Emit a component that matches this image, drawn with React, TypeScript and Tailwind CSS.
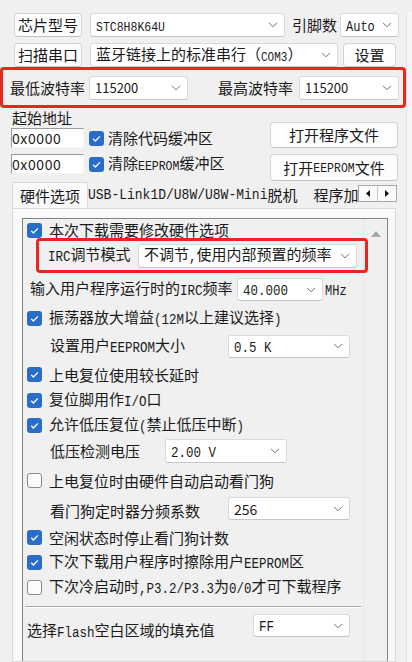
import React from "react";

type C = { children?: React.ReactNode; className?: string };

function M({ children, className }: C) {
  return (
    <span
      className={
        "inline-block scale-y-[1.18] font-['Liberation_Mono',monospace] " + (className ?? "text-[12.5px]")
      }
    >
      {children}
    </span>
  );
}

function Chevron() {
  return (
    <svg width="10" height="6" viewBox="0 0 10 6" className="shrink-0">
      <path d="M1 0.8 L5 4.8 L9 0.8" stroke="#707070" strokeWidth="1" fill="none" />
    </svg>
  );
}

function Select({ children, className }: C) {
  return (
    <div
      className={
        "flex items-center justify-between bg-white border border-[#dadada] border-b-[#c6c6c6] rounded-[3px] pl-[5px] pr-[6px] shrink-0 " +
        (className ?? "")
      }
    >
      <span className="whitespace-nowrap overflow-hidden">{children}</span>
      <Chevron />
    </div>
  );
}

function Btn({ children, className }: C) {
  return (
    <div
      className={
        "flex items-center justify-center bg-[#fdfdfd] border border-[#d4d4d4] border-b-[#c2c2c2] rounded-[4px] shrink-0 whitespace-nowrap " +
        (className ?? "")
      }
    >
      {children}
    </div>
  );
}

function Check({ on }: { on: boolean }) {
  if (on)
    return (
      <span className="w-[15px] h-[15px] rounded-[3px] bg-[#2a6dc9] flex items-center justify-center shrink-0">
        <svg width="11" height="11" viewBox="0 0 11 11">
          <path d="M2.2 5.8 L4.4 8 L8.9 3.4" stroke="white" strokeWidth="1.3" fill="none" />
        </svg>
      </span>
    );
  return <span className="w-[15px] h-[15px] rounded-[3px] border border-[#8a8a8a] bg-[#fbfbfb] shrink-0" />;
}

function CheckRow({ on, children, className }: C & { on: boolean }) {
  return (
    <div className={"flex items-center pl-[4px] " + (className ?? "")}>
      <Check on={on} />
      <span className="ml-[7px] whitespace-nowrap">{children}</span>
    </div>
  );
}

export default function App() {
  return (
    <div className="w-[412px] h-[662px] overflow-hidden bg-[#f0f0f0] flex font-['Noto_Sans_CJK_SC',sans-serif] text-[15px] leading-[20px] text-[#1a1a1a]">
      <div className="w-[406px] h-[662px] flex flex-col shrink-0">
        {/* row 1 */}
        <div className="flex items-center h-[24px] mt-[13px] pl-[14px]">
          <Btn className="w-[68px] h-[24px]">芯片型号</Btn>
          <Select className="w-[195px] h-[24px] ml-[8px]">
            <M className="text-[11.5px]">STC8H8K64U</M>
          </Select>
          <span className="ml-[7px] w-[45px] whitespace-nowrap">引脚数</span>
          <Select className="w-[59px] h-[24px] ml-[3px]">
            <M className="text-[12px]">Auto</M>
          </Select>
        </div>
        {/* row 2 */}
        <div className="flex items-center h-[24px] mt-[6px] pl-[14px]">
          <Btn className="w-[68px] h-[24px]">扫描串口</Btn>
          <Select className="w-[248px] h-[24px] ml-[8px]">
            蓝牙链接上的标准串行（<M className="text-[11px]">COM3</M>）
          </Select>
          <Btn className="w-[53px] h-[24px] ml-[5px]">设置</Btn>
        </div>
        {/* baud rate (highlighted) */}
        <div className="h-[41px] border-[3px] border-[#e8261f] rounded-[4px] flex items-center pl-[7px]">
          <span className="w-[79px] whitespace-nowrap">最低波特率</span>
          <Select className="w-[99px] h-[24px] text-[13px]">115200</Select>
          <span className="ml-[30px] w-[81px] whitespace-nowrap">最高波特率</span>
          <Select className="w-[100px] h-[24px] text-[13px]">115200</Select>
        </div>
        {/* start address */}
        <div className="flex justify-between">
          <div className="flex flex-col pl-[11px]">
            <div className="h-[19px] leading-[19px] pl-[1px]">起始地址</div>
            <div className="flex items-center h-[22px]">
              <div className="w-[73px] h-[20px] bg-white border-t border-l border-[#9c9c9c] border-b-[#f4f4f4] border-r-[#f4f4f4] border-b border-r flex items-center text-[14px] tracking-[0.6px]">
                0x0000
              </div>
              <span className="ml-[5px]">
                <Check on />
              </span>
              <span className="ml-[4px] whitespace-nowrap">清除代码缓冲区</span>
            </div>
            <div className="flex items-center h-[22px] mt-[4px]">
              <div className="w-[73px] h-[20px] bg-white border-t border-l border-[#9c9c9c] border-b-[#f4f4f4] border-r-[#f4f4f4] border-b border-r flex items-center text-[14px] tracking-[0.6px]">
                0x0000
              </div>
              <span className="ml-[5px]">
                <Check on />
              </span>
              <span className="ml-[4px] whitespace-nowrap">
                清除<M className="text-[11.5px]">EEPROM</M>缓冲区
              </span>
            </div>
          </div>
          <div className="flex flex-col pr-[8px] pt-[14px]">
            <Btn className="w-[128px] h-[26px]">打开程序文件</Btn>
            <Btn className="w-[128px] h-[27px] mt-[6px]">
              打开<M className="text-[11.5px]">EEPROM</M>文件
            </Btn>
          </div>
        </div>
        {/* tabs */}
        <div className="flex h-[26px] mt-[1px] ml-[12px] mr-[9px] shrink-0">
          <div className="flex-1 flex items-end overflow-hidden whitespace-nowrap">
            <div className="w-[76px] h-[27px] -mb-[1px] bg-[#f9f9f9] border-t border-l border-r border-[#d9d9d9] rounded-t-[2px] flex items-center justify-center relative z-10 shrink-0">
              硬件选项
            </div>
            <div className="h-[26px] flex items-center shrink-0">
              <M className="text-[13px]">USB-Link1D/U8W/U8W-Mini</M>脱机
            </div>
            <div className="h-[26px] flex items-center pl-[16px] shrink-0">程序加密后传输</div>
          </div>
          <div className="w-[39px] h-[17px] mt-[3px] border border-[#a8a8a8] bg-[#fbfbfb] flex shrink-0">
            <div className="flex-1 flex items-center justify-center">
              <svg width="4" height="7" viewBox="0 0 4 7">
                <path d="M4 0 L0 3.5 L4 7 Z" fill="#111" />
              </svg>
            </div>
            <div className="flex-1 flex items-center justify-center border-l border-[#c8c8c8]">
              <svg width="4" height="7" viewBox="0 0 4 7">
                <path d="M0 0 L4 3.5 L0 7 Z" fill="#111" />
              </svg>
            </div>
          </div>
        </div>
        {/* tab panel */}
        <div className="ml-[12px] w-[384px] flex-1 bg-[#f9f9f9] border border-[#d9d9d9] pt-[9px] pl-[9px] overflow-hidden">
          <div className="w-[366px] h-[460px] border border-[#828282] bg-[#f0f0f0] flex">
            <div className="w-[340px] flex flex-col">
              <CheckRow on className="h-[19px] pt-[3px]">
                本次下载需要修改硬件选项
              </CheckRow>
              <div className="ml-[13px] w-[332px] h-[35px] border-[3px] border-[#e8261f] rounded-[4px] flex items-center pl-[9px] relative z-10">
                <span className="w-[90px] whitespace-nowrap">
                  <M>IRC</M>调节模式
                </span>
                <Select className="w-[219px] h-[24px]">
                  不调节<M>,</M>使用内部预置的频率
                </Select>
              </div>
              <div className="h-[33px] flex items-center pl-[7px]">
                <span className="w-[207px] whitespace-nowrap">
                  输入用户程序运行时的<M>IRC</M>频率
                </span>
                <Select className="w-[86px] h-[23px]">
                  <M>40.000</M>
                </Select>
                <span className="ml-[2px]">
                  <M className="text-[12px]">MHz</M>
                </span>
              </div>
              <CheckRow on className="h-[25px]">
                振荡器放大增益<M>(12M</M>以上建议选择<M>)</M>
              </CheckRow>
              <div className="h-[30px] flex items-center pl-[27px]">
                <span className="w-[178px] whitespace-nowrap">
                  设置用户<M>EEPROM</M>大小
                </span>
                <Select className="w-[122px] h-[23px]">
                  <M>0.5 K</M>
                </Select>
              </div>
              <CheckRow on className="h-[27px]">
                上电复位使用较长延时
              </CheckRow>
              <CheckRow on className="h-[25px]">
                复位脚用作<M>I/O</M>口
              </CheckRow>
              <CheckRow on className="h-[25px]">
                允许低压复位<M>(</M>禁止低压中断<M>)</M>
              </CheckRow>
              <div className="h-[26px] flex items-center pl-[27px]">
                <span className="w-[115px] whitespace-nowrap">低压检测电压</span>
                <Select className="w-[122px] h-[24px]">
                  <M>2.00 V</M>
                </Select>
              </div>
              <CheckRow on={false} className="h-[33px]">
                上电复位时由硬件自动启动看门狗
              </CheckRow>
              <div className="h-[28px] flex items-center pl-[27px]">
                <span className="w-[178px] whitespace-nowrap">看门狗定时器分频系数</span>
                <Select className="w-[122px] h-[23px] self-start text-[14px]">256</Select>
              </div>
              <CheckRow on className="h-[25px]">
                空闲状态时停止看门狗计数
              </CheckRow>
              <CheckRow on className="h-[25px]">
                下次下载用户程序时擦除用户<M>EEPROM</M>区
              </CheckRow>
              <CheckRow on={false} className="h-[24px]">
                下次冷启动时<M>,P3.2/P3.3</M>为<M>0/0</M>才可下载程序
              </CheckRow>
              <div className="mt-[7px] mx-[2px] h-[2px] border-t border-[#a9a9a9] bg-white" />
              <div className="mt-[6px] h-[32px] flex items-start pl-[4px]">
                <span className="w-[226px] mt-[6px] whitespace-nowrap">
                  选择<M>Flash</M>空白区域的填充值
                </span>
                <Select className="w-[97px] h-[23px]">
                  <M>FF</M>
                </Select>
              </div>
            </div>
            <div className="w-[24px] flex justify-center pt-[12px] bg-[#f0f0f0] border-l border-[#e6e6e6]">
              <svg width="10" height="6" viewBox="0 0 10 6">
                <path d="M0 6 L5 0 L10 6 Z" fill="#a6a6a6" />
              </svg>
            </div>
          </div>
        </div>
      </div>
      <div className="flex-1 mt-[12px] bg-[#f6f6f6] border-l border-[#e4e4e4]" />
    </div>
  );
}
